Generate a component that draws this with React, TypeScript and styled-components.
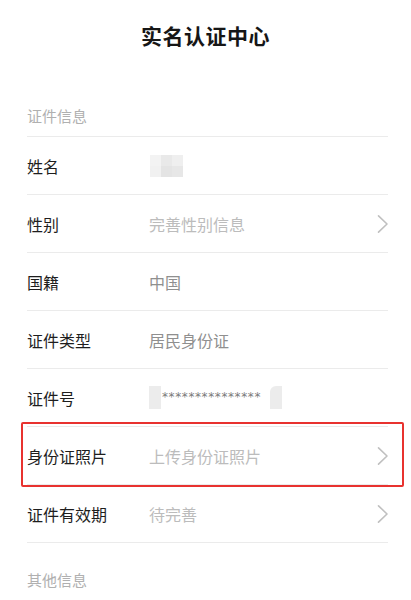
import React from "react";
import styled, { createGlobalStyle } from "styled-components";

const Global = createGlobalStyle`
  html, body { margin: 0; padding: 0; background: #fff; }
  body { font-family: "Noto Sans CJK SC", "Noto Sans", sans-serif; -webkit-font-smoothing: antialiased; }
`;

const Page = styled.div`
  width: 411px;
  height: 600px;
  overflow: hidden;
  background: #fff;
`;

const Header = styled.header`
  height: 79px;
  box-sizing: border-box;
  padding-top: 23px;
  text-align: center;
`;

const Title = styled.h1`
  margin: 0;
  font-size: 21px;
  line-height: 24px;
  font-weight: 700;
  color: #161616;
  letter-spacing: 0.5px;
`;

const List = styled.div`
  padding: 0 23px 0 27px;
`;

const SectionLabel = styled.div`
  box-sizing: border-box;
  height: 58px;
  padding-top: 27px;
  font-size: 15px;
  line-height: 20px;
  color: #b0b0b0;
  border-bottom: 1px solid #ebebeb;
`;

const SectionLabelPlain = styled(SectionLabel)`
  border-bottom: none;
`;

const Row = styled.div<{ $highlight?: boolean }>`
  position: relative;
  box-sizing: border-box;
  height: 58px;
  display: flex;
  align-items: center;
  border-bottom: 1px solid #ebebeb;
  ${(p) =>
    p.$highlight &&
    `
    &::after {
      content: "";
      position: absolute;
      left: -6px;
      right: -16px;
      top: -5px;
      bottom: -3px;
      border: 2px solid #e8322f;
      border-radius: 2px;
      pointer-events: none;
    }
  `}
`;

const Label = styled.div`
  width: 122px;
  flex: none;
  font-size: 16px;
  line-height: 22px;
  color: #1e1e1e;
`;

const Value = styled.div<{ $placeholder?: boolean }>`
  flex: 1;
  font-size: 16px;
  line-height: 22px;
  color: ${(p) => (p.$placeholder ? "#bcbcbc" : "#8f8f8f")};
  display: flex;
  align-items: center;
`;

const Mosaic = styled.div`
  display: grid;
  grid-template-columns: repeat(3, 11px);
  grid-template-rows: repeat(2, 11px);
  margin-left: 1px;
`;

const Tile = styled.div<{ $c: string }>`
  background: ${(p) => p.$c};
`;

const IdMask = styled.div`
  display: flex;
  align-items: flex-start;
  height: 23px;
`;

const MaskBlock = styled.div<{ $round?: boolean }>`
  width: 12px;
  height: 23px;
  background: #ececec;
  border-top-left-radius: ${(p) => (p.$round ? "6px" : "0")};
`;

const Stars = styled.span`
  font-family: "DejaVu Sans", sans-serif;
  font-size: 12px;
  line-height: 14px;
  color: #7a7a7a;
  letter-spacing: 0.6px;
  margin: 0 9px 0 1px;
  padding-top: 4px;
`;

const Chevron = () => (
  <svg width="12" height="20" viewBox="0 0 12 20" style={{ flex: "none", marginRight: -1 }}>
    <path d="M1.5 1.8 L10 10 L1.5 18.2" fill="none" stroke="#c0c0c0" strokeWidth="1.6" strokeLinecap="round" strokeLinejoin="round" />
  </svg>
);

const mosaicColors = ["#f3f3f3", "#e9e9e9", "#efefef", "#f1f1f1", "#e4e4e4", "#e7e7e7"];

export default function App() {
  return (
    <Page>
      <Global />
      <Header>
        <Title>实名认证中心</Title>
      </Header>
      <List>
        <SectionLabel>证件信息</SectionLabel>
        <Row>
          <Label>姓名</Label>
          <Value>
            <Mosaic>
              {mosaicColors.map((c, i) => (
                <Tile key={i} $c={c} />
              ))}
            </Mosaic>
          </Value>
        </Row>
        <Row>
          <Label>性别</Label>
          <Value $placeholder>完善性别信息</Value>
          <Chevron />
        </Row>
        <Row>
          <Label>国籍</Label>
          <Value>中国</Value>
        </Row>
        <Row>
          <Label>证件类型</Label>
          <Value>居民身份证</Value>
        </Row>
        <Row>
          <Label>证件号</Label>
          <Value>
            <IdMask>
              <MaskBlock />
              <Stars>***************</Stars>
              <MaskBlock $round />
            </IdMask>
          </Value>
        </Row>
        <Row $highlight>
          <Label>身份证照片</Label>
          <Value $placeholder>上传身份证照片</Value>
          <Chevron />
        </Row>
        <Row>
          <Label>证件有效期</Label>
          <Value $placeholder>待完善</Value>
          <Chevron />
        </Row>
        <SectionLabelPlain>其他信息</SectionLabelPlain>
      </List>
    </Page>
  );
}
